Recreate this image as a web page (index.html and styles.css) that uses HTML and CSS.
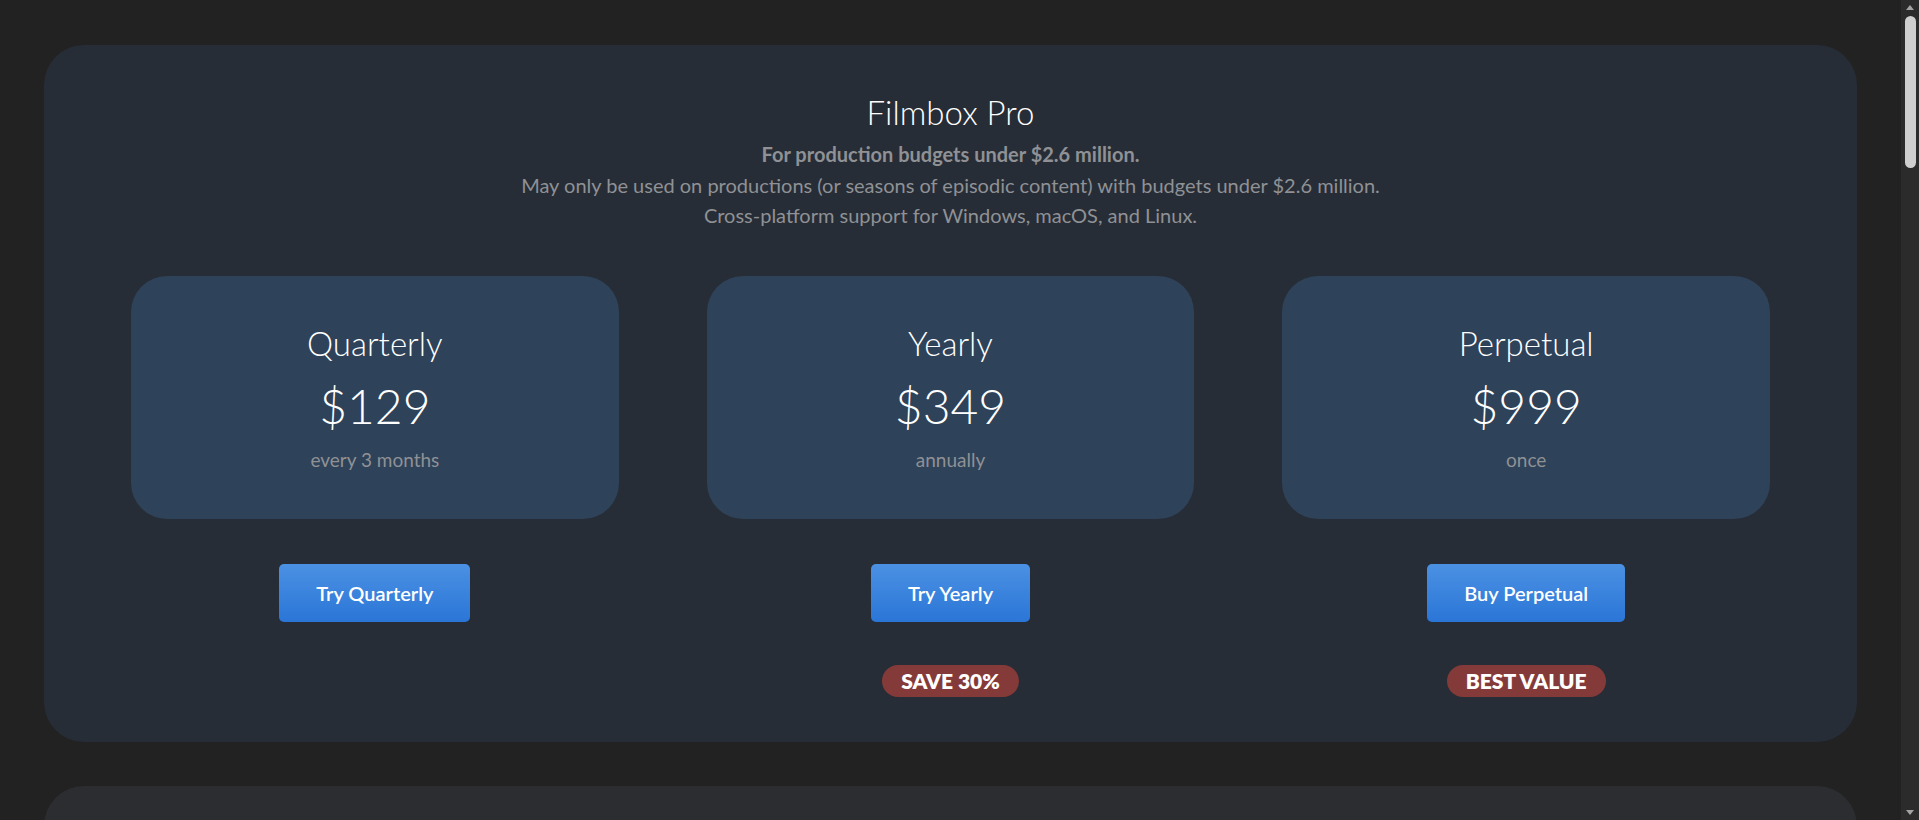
FILE: index.html
```html
<!DOCTYPE html>
<html lang="en">
<head>
<meta charset="utf-8">
<title>Filmbox Pro pricing</title>
<link rel="stylesheet" href="styles.css">
</head>
<body>
<main class="page">
  <section class="product">
    <header class="product-head">
      <h1 class="product-title">Filmbox Pro</h1>
      <p class="product-lead">For production budgets under $2.6 million.</p>
      <p class="product-desc">May only be used on productions (or seasons of episodic content) with budgets under $2.6 million.</p>
      <p class="product-desc">Cross-platform support for Windows, macOS, and Linux.</p>
    </header>
    <div class="plans">
      <div class="plan">
        <div class="plan-box">
          <div class="plan-name">Quarterly</div>
          <div class="plan-price">$129</div>
          <div class="plan-term">every 3 months</div>
        </div>
        <a class="plan-btn" href="#">Try Quarterly</a>
      </div>
      <div class="plan">
        <div class="plan-box">
          <div class="plan-name">Yearly</div>
          <div class="plan-price">$349</div>
          <div class="plan-term">annually</div>
        </div>
        <a class="plan-btn" href="#">Try Yearly</a>
        <span class="plan-badge">SAVE 30%</span>
      </div>
      <div class="plan">
        <div class="plan-box">
          <div class="plan-name">Perpetual</div>
          <div class="plan-price">$999</div>
          <div class="plan-term">once</div>
        </div>
        <a class="plan-btn" href="#">Buy Perpetual</a>
        <span class="plan-badge">BEST VALUE</span>
      </div>
    </div>
  </section>
  <section class="product product-alt"></section>
  <section class="product product-alt"></section>
  <section class="product product-alt"></section>
  <section class="product product-alt"></section>
</main>
<div class="scrollbar" aria-hidden="true">
  <svg class="scroll-arrow" width="18" height="14" viewBox="0 0 18 14"><path d="M5 10 L9 5 L13 10 Z" fill="#a3a3a3"/></svg>
  <div class="scroll-thumb"></div>
  <div class="scroll-rest"></div>
  <svg class="scroll-arrow" width="18" height="14" viewBox="0 0 18 14"><path d="M5 4 L9 9 L13 4 Z" fill="#a3a3a3"/></svg>
</div>
</body>
</html>
```

FILE: styles.css
```css
html, body {
  margin: 0;
  padding: 0;
  background: #222222;
}

body {
  font-family: Lato, "Open Sans", "Liberation Sans", sans-serif;
  color: #ffffff;
}

.page {
  display: flex;
  flex-direction: column;
  gap: 44px;
  padding: 45px 62px 45px 44px;
}

.product {
  background: #272d36;
  border-radius: 40px;
  padding: 47px 87px 45px;
}

.product-alt {
  background: #2c2d31;
  min-height: 700px;
}

.product-head {
  text-align: center;
  margin-bottom: 45px;
}

.product-title {
  margin: 0 0 7px;
  font-size: 33px;
  line-height: 40px;
  font-weight: 300;
  color: #ffffff;
}

.product-lead,
.product-desc {
  margin: 0;
  font-size: 20px;
  line-height: 30.5px;
  color: #8f9195;
}

.product-lead {
  font-weight: 700;
}

.product-desc {
  font-weight: 400;
}

.plans {
  display: grid;
  grid-template-columns: repeat(3, 1fr);
  column-gap: 88px;
}

.plan {
  display: flex;
  flex-direction: column;
  align-items: center;
}

.plan-box {
  align-self: stretch;
  height: 243px;
  box-sizing: border-box;
  background: #2e4259;
  border-radius: 36px;
  display: flex;
  flex-direction: column;
  align-items: center;
  justify-content: center;
  text-align: center;
}

.plan-name {
  font-size: 33px;
  line-height: 40px;
  font-weight: 300;
  color: #ffffff;
}

.plan-price {
  margin-top: 12px;
  font-size: 48px;
  line-height: 61px;
  font-weight: 300;
  color: #ffffff;
}

.plan-term {
  margin-top: 12px;
  font-size: 19px;
  line-height: 23px;
  font-weight: 400;
  color: #8f9195;
}

.plan-btn {
  margin-top: 45px;
  height: 58px;
  box-sizing: border-box;
  padding: 0 37px;
  display: flex;
  align-items: center;
  border-radius: 5px;
  background: linear-gradient(#4b91e3, #2a76d7);
  color: #ffffff;
  text-decoration: none;
  font-size: 20px;
  font-weight: 600;
}

.plan-badge {
  margin-top: 43px;
  height: 32px;
  box-sizing: border-box;
  padding: 0 19px;
  display: flex;
  align-items: center;
  border-radius: 16px;
  background: #843a39;
  color: #ffffff;
  font-size: 21px;
  font-weight: 800;
}

.scrollbar {
  position: fixed;
  top: 0;
  right: 0;
  width: 18px;
  height: 100vh;
  background: #2b2b2b;
  display: flex;
  flex-direction: column;
  align-items: center;
}

.scroll-arrow {
  display: block;
  flex: none;
}

.scroll-thumb {
  flex: none;
  width: 11px;
  height: 152px;
  margin-top: 2px;
  border-radius: 6px;
  background: #cfcfcf;
}

.scroll-rest {
  flex: 1;
}
```
